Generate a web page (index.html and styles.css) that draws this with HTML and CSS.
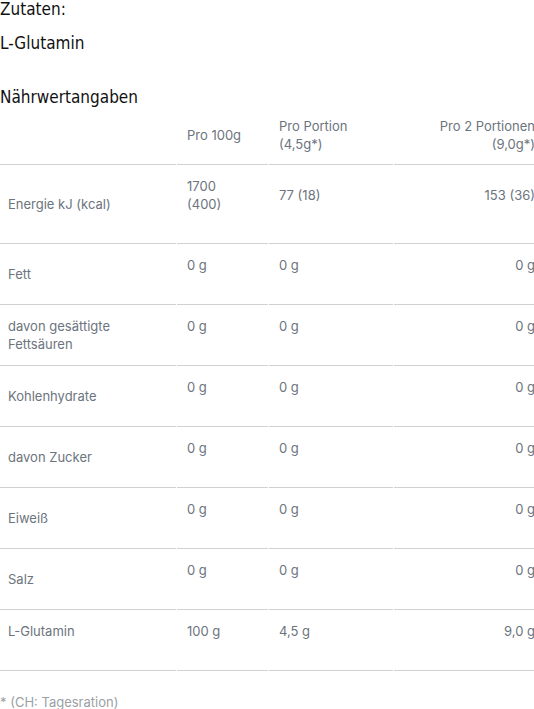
FILE: index.html
```html
<!DOCTYPE html>
<html lang="de">
<head>
<meta charset="utf-8">
<title>Nährwertangaben</title>
<link rel="stylesheet" href="styles.css">
</head>
<body>
<section class="ingredients">
  <h3 class="heading">Zutaten:</h3>
  <p class="ingredient-text">L-Glutamin</p>
</section>
<section class="nutrition">
  <h3 class="heading nutrition-heading">Nährwertangaben</h3>
  <table class="nutri-table">
    <colgroup>
      <col class="c1"><col class="c2"><col class="c3"><col class="c4">
    </colgroup>
    <thead>
      <tr>
        <th class="label"></th>
        <th class="val">Pro 100g</th>
        <th class="val">Pro Portion<br>(4,5g*)</th>
        <th class="val right">Pro 2 Portionen<br>(9,0g*)</th>
      </tr>
    </thead>
    <tbody>
      <tr>
        <td class="label">Energie kJ (kcal)</td>
        <td class="val">1700<br>(400)</td>
        <td class="val">77 (18)</td>
        <td class="val right">153 (36)</td>
      </tr>
      <tr>
        <td class="label">Fett</td>
        <td class="val">0 g</td>
        <td class="val">0 g</td>
        <td class="val right">0 g</td>
      </tr>
      <tr>
        <td class="label">davon gesättigte<br>Fettsäuren</td>
        <td class="val">0 g</td>
        <td class="val">0 g</td>
        <td class="val right">0 g</td>
      </tr>
      <tr>
        <td class="label">Kohlenhydrate</td>
        <td class="val">0 g</td>
        <td class="val">0 g</td>
        <td class="val right">0 g</td>
      </tr>
      <tr>
        <td class="label">davon Zucker</td>
        <td class="val">0 g</td>
        <td class="val">0 g</td>
        <td class="val right">0 g</td>
      </tr>
      <tr>
        <td class="label">Eiweiß</td>
        <td class="val">0 g</td>
        <td class="val">0 g</td>
        <td class="val right">0 g</td>
      </tr>
      <tr>
        <td class="label">Salz</td>
        <td class="val">0 g</td>
        <td class="val">0 g</td>
        <td class="val right">0 g</td>
      </tr>
      <tr>
        <td class="label label-top">L-Glutamin</td>
        <td class="val">100 g</td>
        <td class="val">4,5 g</td>
        <td class="val right">9,0 g</td>
      </tr>
    </tbody>
  </table>
  <p class="footnote">* (CH: Tagesration)</p>
</section>
</body>
</html>
```
FILE: styles.css
```css
html, body {
  margin: 0;
  padding: 0;
  background: #ffffff;
}
body {
  width: 534px;
  overflow: hidden;
  font-family: Inter, "Noto Sans", sans-serif;
}
.heading {
  margin: 0;
  font-family: "DejaVu Sans", sans-serif;
  font-stretch: condensed;
  font-weight: 400;
  font-size: 17px;
  line-height: 18px;
  color: #111111;
}
.ingredient-text {
  margin: 16px 0 0;
  font-family: "DejaVu Sans", sans-serif;
  font-stretch: condensed;
  font-size: 17px;
  line-height: 18px;
  color: #111111;
}
.nutrition-heading {
  margin-top: 36px;
}
.nutri-table {
  width: 534px;
  table-layout: fixed;
  border-collapse: separate;
  border-spacing: 1px 0;
  margin: 0 -1px;
  color: #6c747d;
  font-size: 13px;
  line-height: 18px;
}
.c1 { width: 176px; }
.c2 { width: 91px; }
.c3 { width: 124px; }
.c4 { width: 141px; }
.nutri-table th {
  font-weight: 400;
  text-align: left;
  vertical-align: middle;
  padding: 0 0 0 10px;
  border-bottom: 1px solid #cfd2d5;
}
.nutri-table thead tr {
  height: 59px;
}
.nutri-table td {
  border-bottom: 1px solid #cfd2d5;
}
.nutri-table td.label {
  vertical-align: middle;
  padding: 12px 0 12px 8px;
}
.nutri-table td.label-top {
  padding: 12px 0 30px 8px;
}
.nutri-table td.val {
  vertical-align: middle;
  padding: 12px 0 30px 10px;
}
.nutri-table .right {
  text-align: right;
  padding-right: 0;
}
.footnote {
  margin: 24px 0 0;
  font-size: 13px;
  line-height: 14px;
  color: #9aa0a6;
}
```
